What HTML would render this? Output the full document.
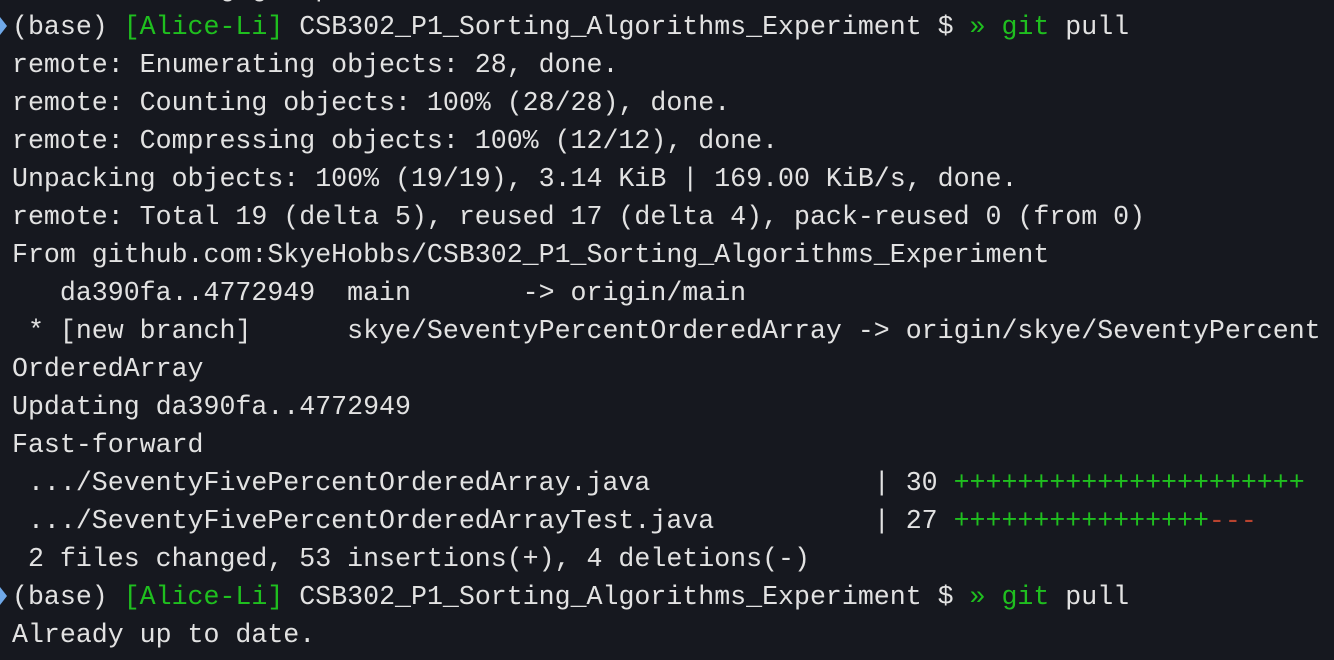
<!DOCTYPE html>
<html><head><meta charset="utf-8"><style>
html,body{margin:0;padding:0;background:#16181f;width:1334px;height:660px;overflow:hidden;position:relative}
pre{margin:0;position:absolute;left:12px;top:-30px;height:720px;font-family:"Liberation Mono",monospace;font-size:26.6px;line-height:38px;color:#e2e2e2;white-space:pre}
.g{color:#1fbf1f}.r{color:#b8432f}
.m{position:absolute;left:0;width:0;height:0;border-top:9px solid transparent;border-bottom:9px solid transparent;border-left:7px solid #6fa8e8}
</style></head><body>
<div class="m" style="top:17px"></div>
<div class="m" style="top:587px"></div>
<pre>         using git pull
(base) <span class="g">[Alice-Li]</span> CSB302_P1_Sorting_Algorithms_Experiment $ <span class="g">» git</span> pull
remote: Enumerating objects: 28, done.
remote: Counting objects: 100% (28/28), done.
remote: Compressing objects: 100% (12/12), done.
Unpacking objects: 100% (19/19), 3.14 KiB | 169.00 KiB/s, done.
remote: Total 19 (delta 5), reused 17 (delta 4), pack-reused 0 (from 0)
From github.com:SkyeHobbs/CSB302_P1_Sorting_Algorithms_Experiment
   da390fa..4772949  main       -&gt; origin/main
 * [new branch]      skye/SeventyPercentOrderedArray -&gt; origin/skye/SeventyPercent
OrderedArray
Updating da390fa..4772949
Fast-forward
 .../SeventyFivePercentOrderedArray.java              | 30 <span class="g">++++++++++++++++++++++</span>
 .../SeventyFivePercentOrderedArrayTest.java          | 27 <span class="g">++++++++++++++++</span><span class="r">---</span>
 2 files changed, 53 insertions(+), 4 deletions(-)
(base) <span class="g">[Alice-Li]</span> CSB302_P1_Sorting_Algorithms_Experiment $ <span class="g">» git</span> pull
Already up to date.
(base) <span class="g">[Alice-Li]</span> CSB302_P1_Sorting_Algorithms_Experiment $ <span class="g">» git</span> pull
</pre>
</body></html>
